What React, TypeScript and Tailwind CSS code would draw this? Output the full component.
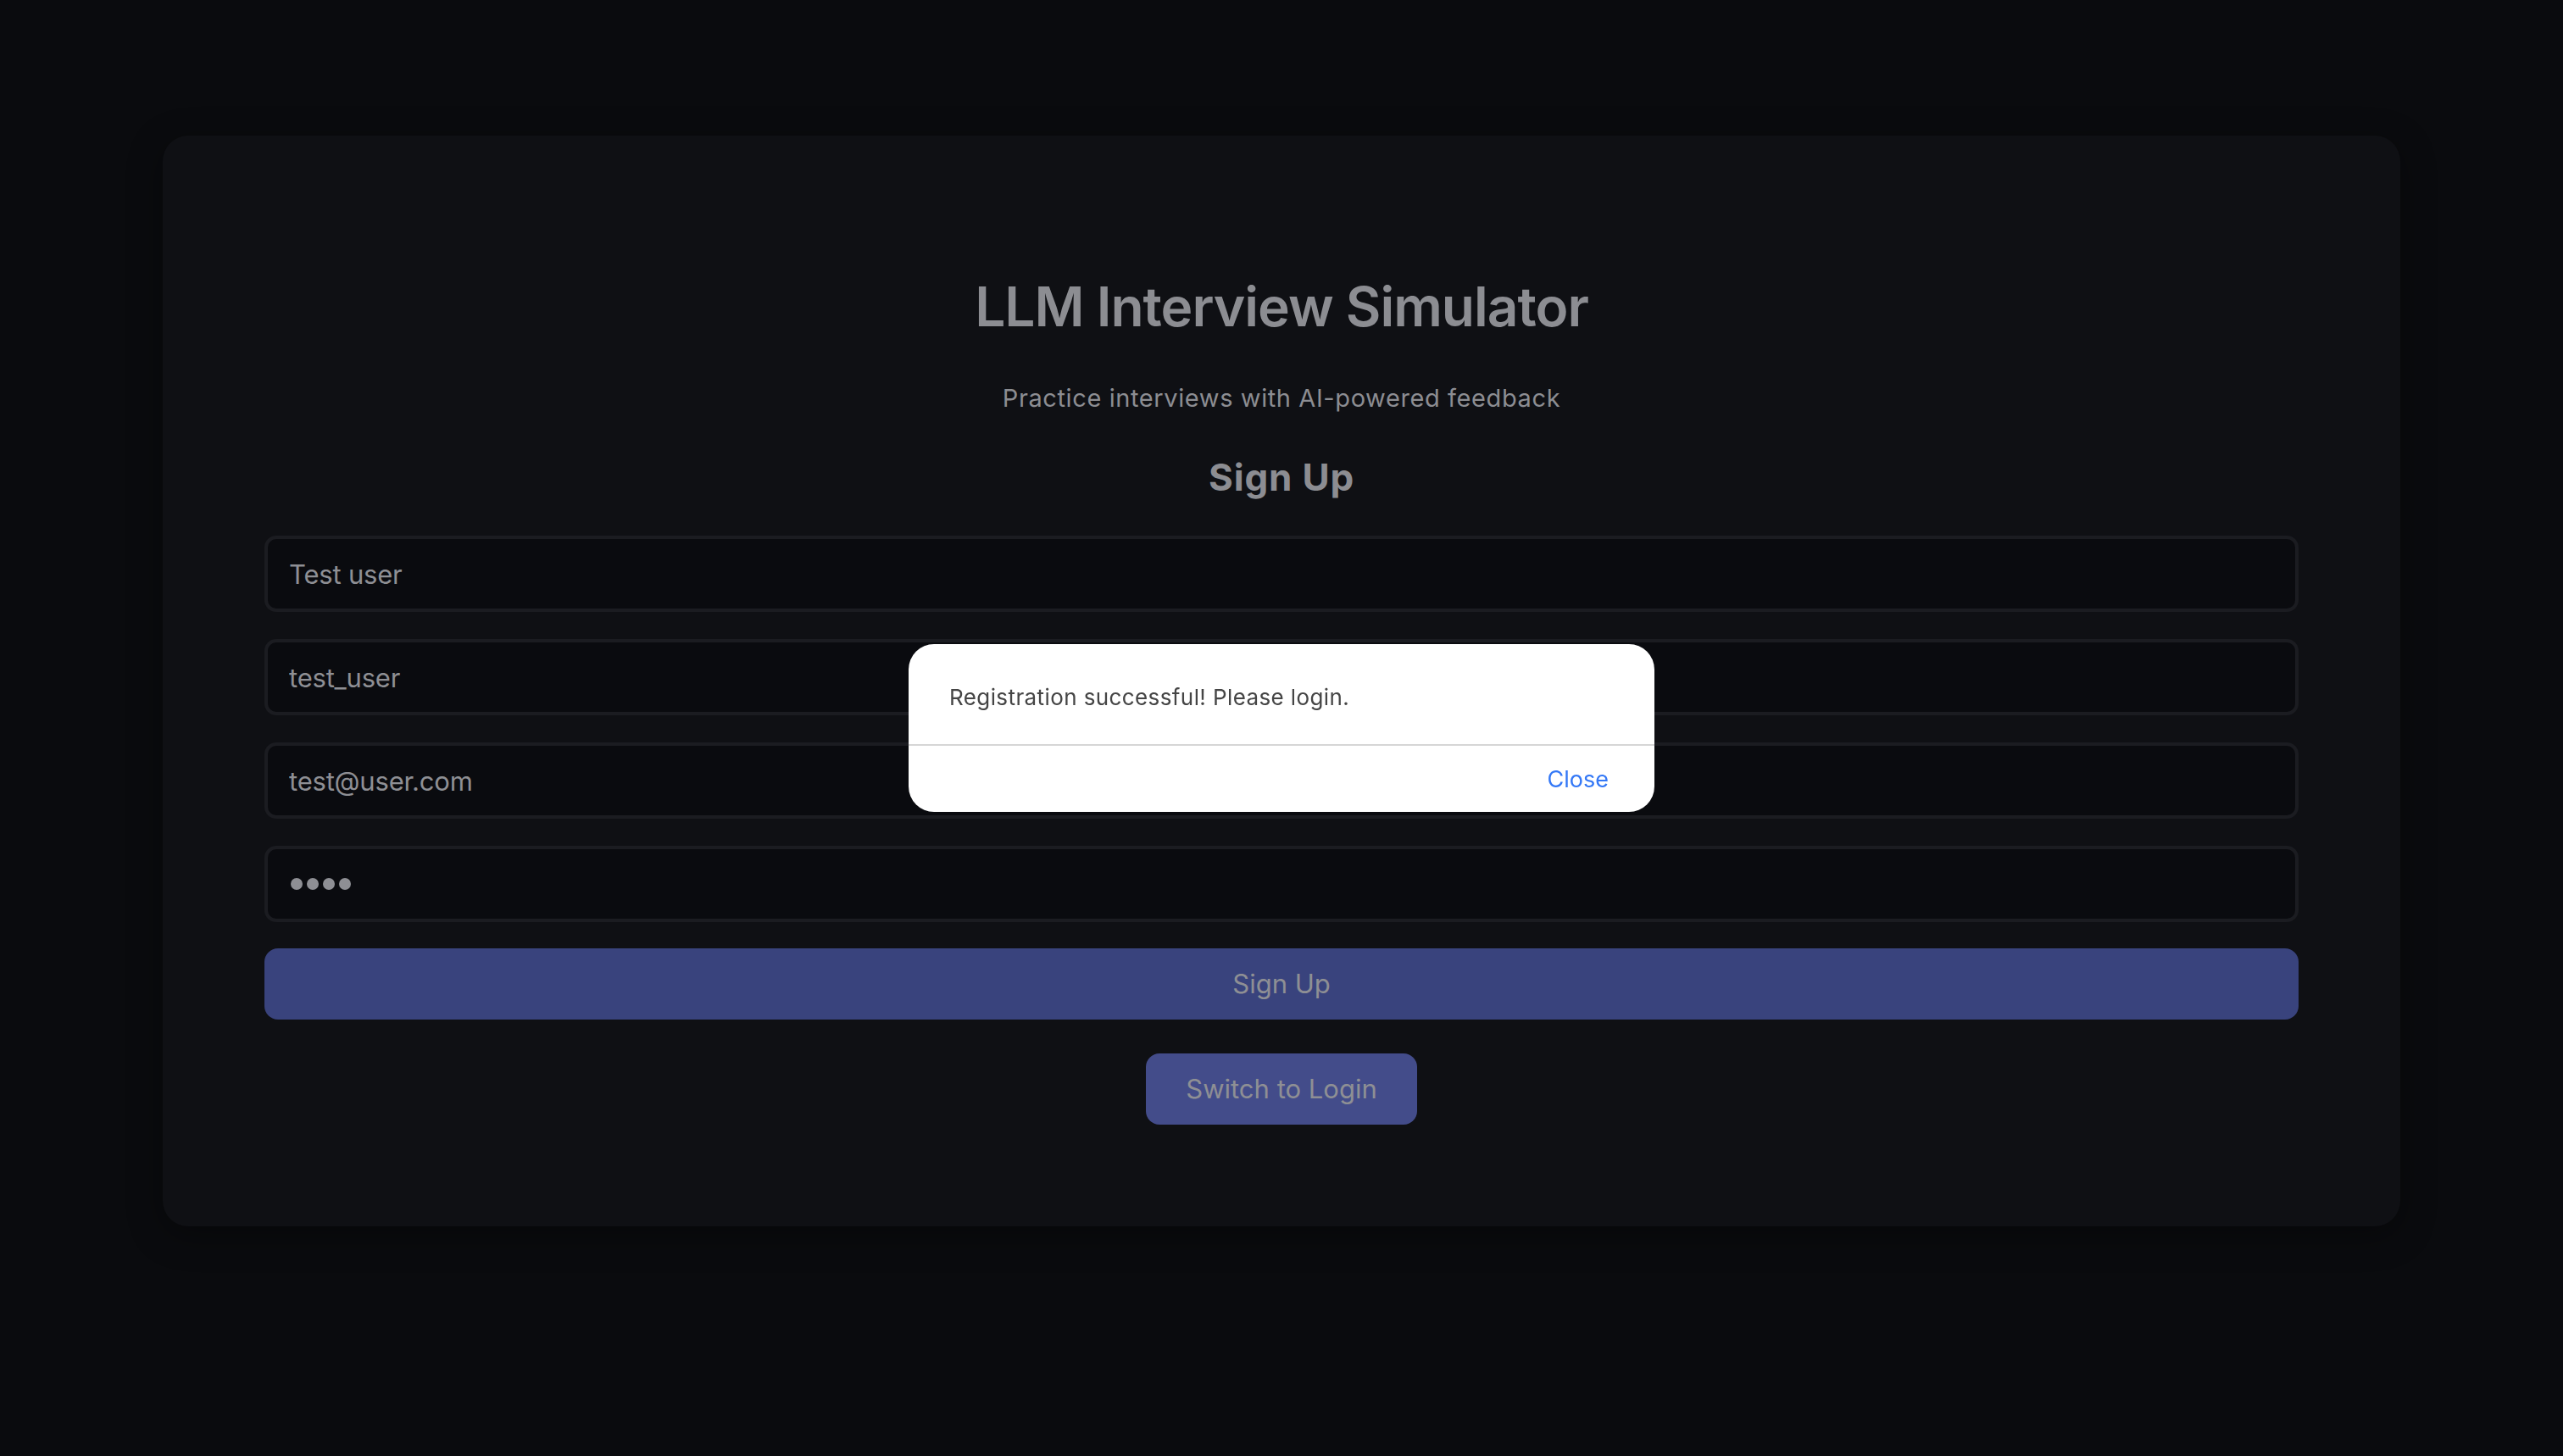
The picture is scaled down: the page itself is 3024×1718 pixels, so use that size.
import React from "react";

function Field({ value }: { value: string }) {
  return (
    <input
      readOnly
      value={value}
      className="h-[90px] w-full rounded-[14px] border-[4px] border-[#1b1c21] bg-[#0a0b0f] px-[25px] text-[31px] tracking-[-0.2px] text-[#8e8f94] outline-none"
    />
  );
}

export default function App() {
  return (
    <div className="relative min-h-[1718px] w-full bg-[#0a0b0e] font-['Inter','Noto_Sans',sans-serif]">
      <div className="flex justify-center pt-[160px]">
        <div className="flex w-[2640px] flex-col items-center rounded-[30px] bg-[#0f1014] px-[120px] pt-[163px] pb-[120px] shadow-[0_10px_40px_rgba(0,0,0,0.35)]">
          <h1 className="text-[64px] leading-[77px] font-semibold tracking-[-1px] text-[#8c8d92]">
            LLM Interview Simulator
          </h1>
          <p className="mt-[53px] text-[29px] leading-[34px] tracking-[0.6px] text-[#8c8d92]">
            Practice interviews with AI-powered feedback
          </p>
          <h2 className="mt-[50px] text-[44px] leading-[53px] font-bold tracking-[0.8px] text-[#8c8d92]">
            Sign Up
          </h2>
          <div className="mt-[42px] flex w-full flex-col gap-[32px]">
            <Field value="Test user" />
            <Field value="test_user" />
            <Field value="test@user.com" />
            <div
              role="textbox"
              aria-label="password"
              className="flex h-[90px] w-full items-center gap-[5px] rounded-[14px] border-[4px] border-[#1b1c21] bg-[#0a0b0f] px-[27px]"
            >
              <span className="h-[14px] w-[14px] rounded-full bg-[#8e8f94]" />
              <span className="h-[14px] w-[14px] rounded-full bg-[#8e8f94]" />
              <span className="h-[14px] w-[14px] rounded-full bg-[#8e8f94]" />
              <span className="h-[14px] w-[14px] rounded-full bg-[#8e8f94]" />
            </div>
          </div>
          <button className="mt-[31px] h-[84px] w-full rounded-[16px] bg-[#39437d] text-[31px] text-[#8e8f94]">
            Sign Up
          </button>
          <button className="mt-[40px] h-[84px] rounded-[16px] bg-[#434c8a] px-[47px] text-[31px] text-[#8e8f94]">
            Switch to Login
          </button>
        </div>
      </div>

      <div className="fixed inset-0 flex items-center justify-center">
        <div className="w-[880px] overflow-hidden rounded-[30px] bg-white">
          <div className="h-[118px] px-[48px] pt-[43px]">
            <p className="text-[26px] leading-[39px] tracking-[0.4px] text-[#454545]">
              Registration successful! Please login.
            </p>
          </div>
          <div className="h-[2px] bg-[#d6d6d6]" />
          <div className="flex h-[78px] items-center justify-end px-[54px] pt-[2px]">
            <button className="text-[27px] leading-[32px] text-[#3478f6]">Close</button>
          </div>
        </div>
      </div>
    </div>
  );
}
